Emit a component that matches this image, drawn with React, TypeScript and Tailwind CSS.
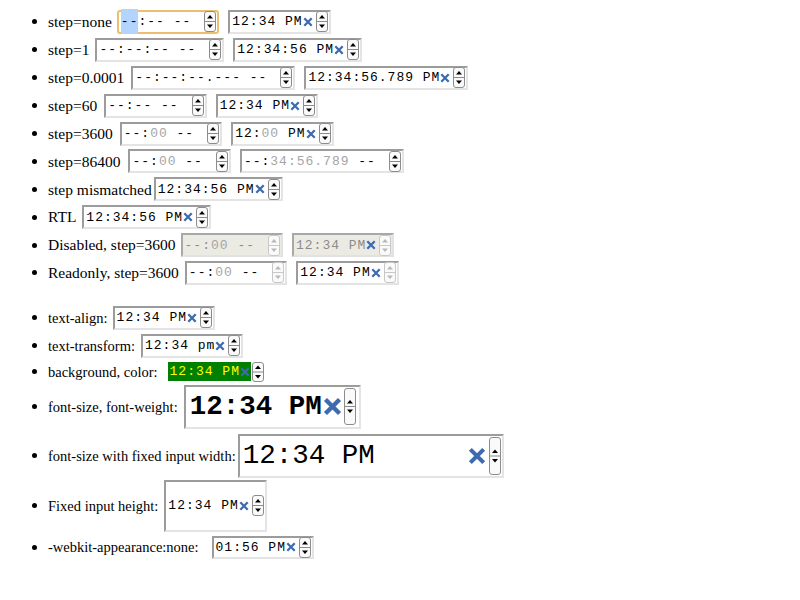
import type { ReactNode } from "react";

// "--:{00} --" -> {..} is a dim field, [..] is the selected field
function Txt({ v, cls = "" }: { v: string; cls?: string }) {
  const parts = v.split(/(\{[^}]*\}|\[[^\]]*\])/).filter(Boolean);
  return (
    <span className={`whitespace-pre leading-none ${cls}`}>
      {parts.map((p, i) => {
        if (p.startsWith("{")) return <span key={i} className="text-[#a5a5a5]">{p.slice(1, -1)}</span>;
        if (p.startsWith("[")) return <span key={i} className="bg-[#b3d4fc] py-[5px]">{p.slice(1, -1)}</span>;
        return <span key={i}>{p}</span>;
      })}
    </span>
  );
}

function Spin({ h = 21, off = false }: { h?: number; off?: boolean }) {
  const m = h / 2;
  const c = off ? "#b8b8b8" : "#000";
  const b = off ? "#c8c8c8" : "#8c8c8c";
  return (
    <svg width="12" height={h} viewBox={`0 0 12 ${h}`} className="shrink-0">
      <rect x="0.5" y="0.5" width="11" height={h - 1} rx="2.5" fill="#fafafa" stroke={b} />
      <line x1="1" y1={m} x2="11" y2={m} stroke={b} strokeWidth="1" />
      <path d={`M3 ${m - 3} L9 ${m - 3} L6 ${m - 6.5} Z`} fill={c} />
      <path d={`M3 ${m + 3} L9 ${m + 3} L6 ${m + 6.5} Z`} fill={c} />
    </svg>
  );
}

function Clear({ s = 10, hide = false }: { s?: number; hide?: boolean }) {
  return (
    <svg width={s} height={s} viewBox="0 0 10 10" className={hide ? "invisible shrink-0" : "shrink-0"}>
      <path d="M1.3 1.3 L8.7 8.7 M8.7 1.3 L1.3 8.7" stroke="#3e6bb0" strokeWidth="2.3" />
    </svg>
  );
}

type State = "normal" | "focus" | "disabled" | "readonly";

const mono = "font-['Liberation_Mono',monospace] text-[13px] tracking-[1px]";

function Field({ v, clear = true, state = "normal", cls = "" }: { v: string; clear?: boolean; state?: State; cls?: string }) {
  let box = "border-2 border-t-[#9c9c9c] border-l-[#9c9c9c] border-b-[#e4e4e4] border-r-[#e4e4e4] bg-white text-black";
  if (state === "focus") box = "border-2 border-[#ecbf6e] rounded-[3px] bg-white text-black";
  if (state === "disabled") box = "border-2 border-t-[#a8a8a8] border-l-[#a8a8a8] border-b-[#e2e2e2] border-r-[#e2e2e2] bg-[#ebebe4] text-[#8c8c8c]";
  return (
    <span className={`inline-flex items-center h-[24px] pl-[2px] pr-[1px] shrink-0 ${box} ${cls}`}>
      <Txt v={v} cls={mono} />
      <span className="mr-[3px] flex"><Clear hide={!clear} /></span>
      <Spin off={state === "disabled" || state === "readonly"} />
    </span>
  );
}

function Row({ label, h, small = false, gap = "mr-[6px]", children }: { label: string; h: string; small?: boolean; gap?: string; children: ReactNode }) {
  return (
    <div className={`flex items-center ${h}`}>
      <span className="ml-[32px] mr-[11px] w-[5px] h-[5px] rounded-full bg-black shrink-0" />
      <span className={`whitespace-nowrap leading-none ${gap} ${small ? "text-[14.5px]" : "text-[15.5px]"}`}>{label}</span>
      {children}
    </div>
  );
}

export default function App() {
  return (
    <div className="w-[800px] h-[600px] bg-white overflow-hidden font-['Liberation_Serif',serif] text-black">
      <div className="pt-[8px]">
        <Row label="step=none" h="h-[27.9px]" gap="mr-[5px]">
          <Field v="[--]:-- --" clear={false} state="focus" />
          <Field v="12:34 PM" cls="ml-[9px]" />
        </Row>
        <Row label="step=1" h="h-[27.9px]">
          <Field v="--:--:-- --" clear={false} />
          <Field v="12:34:56 PM" cls="ml-[9px]" />
        </Row>
        <Row label="step=0.0001" h="h-[27.9px]" gap="mr-[7px]">
          <Field v="--:--:--.--- --" clear={false} />
          <Field v="12:34:56.789 PM" cls="ml-[9px]" />
        </Row>
        <Row label="step=60" h="h-[27.9px]" gap="mr-[7px]">
          <Field v="--:-- --" clear={false} />
          <Field v="12:34 PM" cls="ml-[9px]" />
        </Row>
        <Row label="step=3600" h="h-[27.9px]" gap="mr-[7px]">
          <Field v="--:{00} --" clear={false} />
          <Field v="12:{00} PM" cls="ml-[9px]" />
        </Row>
        <Row label="step=86400" h="h-[27.9px]" gap="mr-[8px]">
          <Field v="--:{00} --" clear={false} />
          <Field v="--:{34:56.789} --" clear={false} cls="ml-[9px]" />
        </Row>
        <Row label="step mismatched" h="h-[27.9px]" gap="mr-[2px]">
          <Field v="12:34:56 PM" />
        </Row>
        <Row label="RTL" h="h-[27.9px]">
          <Field v="12:34:56 PM" />
        </Row>
        <Row label="Disabled, step=3600" h="h-[27.9px]" gap="mr-[5px]">
          <Field v="--:{00} --" clear={false} state="disabled" />
          <Field v="12:34 PM" state="disabled" cls="ml-[9px]" />
        </Row>
        <Row label="Readonly, step=3600" h="h-[27.9px]">
          <Field v="--:{00} --" clear={false} state="readonly" />
          <Field v="12:34 PM" state="readonly" cls="ml-[9px]" />
        </Row>
      </div>

      <div className="mt-[17px]">
        <Row label="text-align:" h="h-[28px]" small gap="mr-[5px]">
          <Field v="12:34 PM" />
        </Row>
        <Row label="text-transform:" h="h-[28px]" small gap="mr-[6px]">
          <Field v="12:34 pm" />
        </Row>
        <Row label="background, color:" h="h-[24px]" small gap="mr-[10px]">
          <span className="inline-flex items-center h-[19px] pl-[2px] pr-[1px] bg-[#008000] text-[#ffff00]">
            <Txt v="12:34 PM" cls={mono} />
            <span className="flex"><Clear /></span>
          </span>
          <span className="ml-[1px] flex"><Spin h={20} /></span>
        </Row>
        <Row label="font-size, font-weight:" h="h-[46px]" small>
          <span className="inline-flex items-center h-[44px] pl-[4px] pr-[3px] border-2 border-t-[#9c9c9c] border-l-[#9c9c9c] border-b-[#e4e4e4] border-r-[#e4e4e4] bg-white">
            <Txt v="12:34 PM" cls="font-['Liberation_Mono',monospace] text-[27.5px] font-bold" />
            <span className="ml-[1px] mr-[2px] flex"><Clear s={19} /></span>
            <Spin h={37} />
          </span>
        </Row>
        <Row label="font-size with fixed input width:" h="h-[52px]" small gap="mr-[2px]">
          <span className="inline-flex items-center w-[266px] h-[44px] pl-[3px] pr-[1px] border-2 border-t-[#9c9c9c] border-l-[#9c9c9c] border-b-[#e4e4e4] border-r-[#e4e4e4] bg-white">
            <Txt v="12:34 PM" cls="font-['Liberation_Mono',monospace] text-[27.5px] flex-1" />
            <span className="mr-[3px] flex"><Clear s={18} /></span>
            <Spin h={38} />
          </span>
        </Row>
        <Row label="Fixed input height:" h="h-[48px]" small>
          <Field v="12:34 PM" cls="!h-[52px]" />
        </Row>
        <Row label="-webkit-appearance:none:" h="h-[35px]" small gap="mr-[13px]">
          <Field v="01:56 PM" cls="!h-[23px]" />
        </Row>
      </div>
    </div>
  );
}
